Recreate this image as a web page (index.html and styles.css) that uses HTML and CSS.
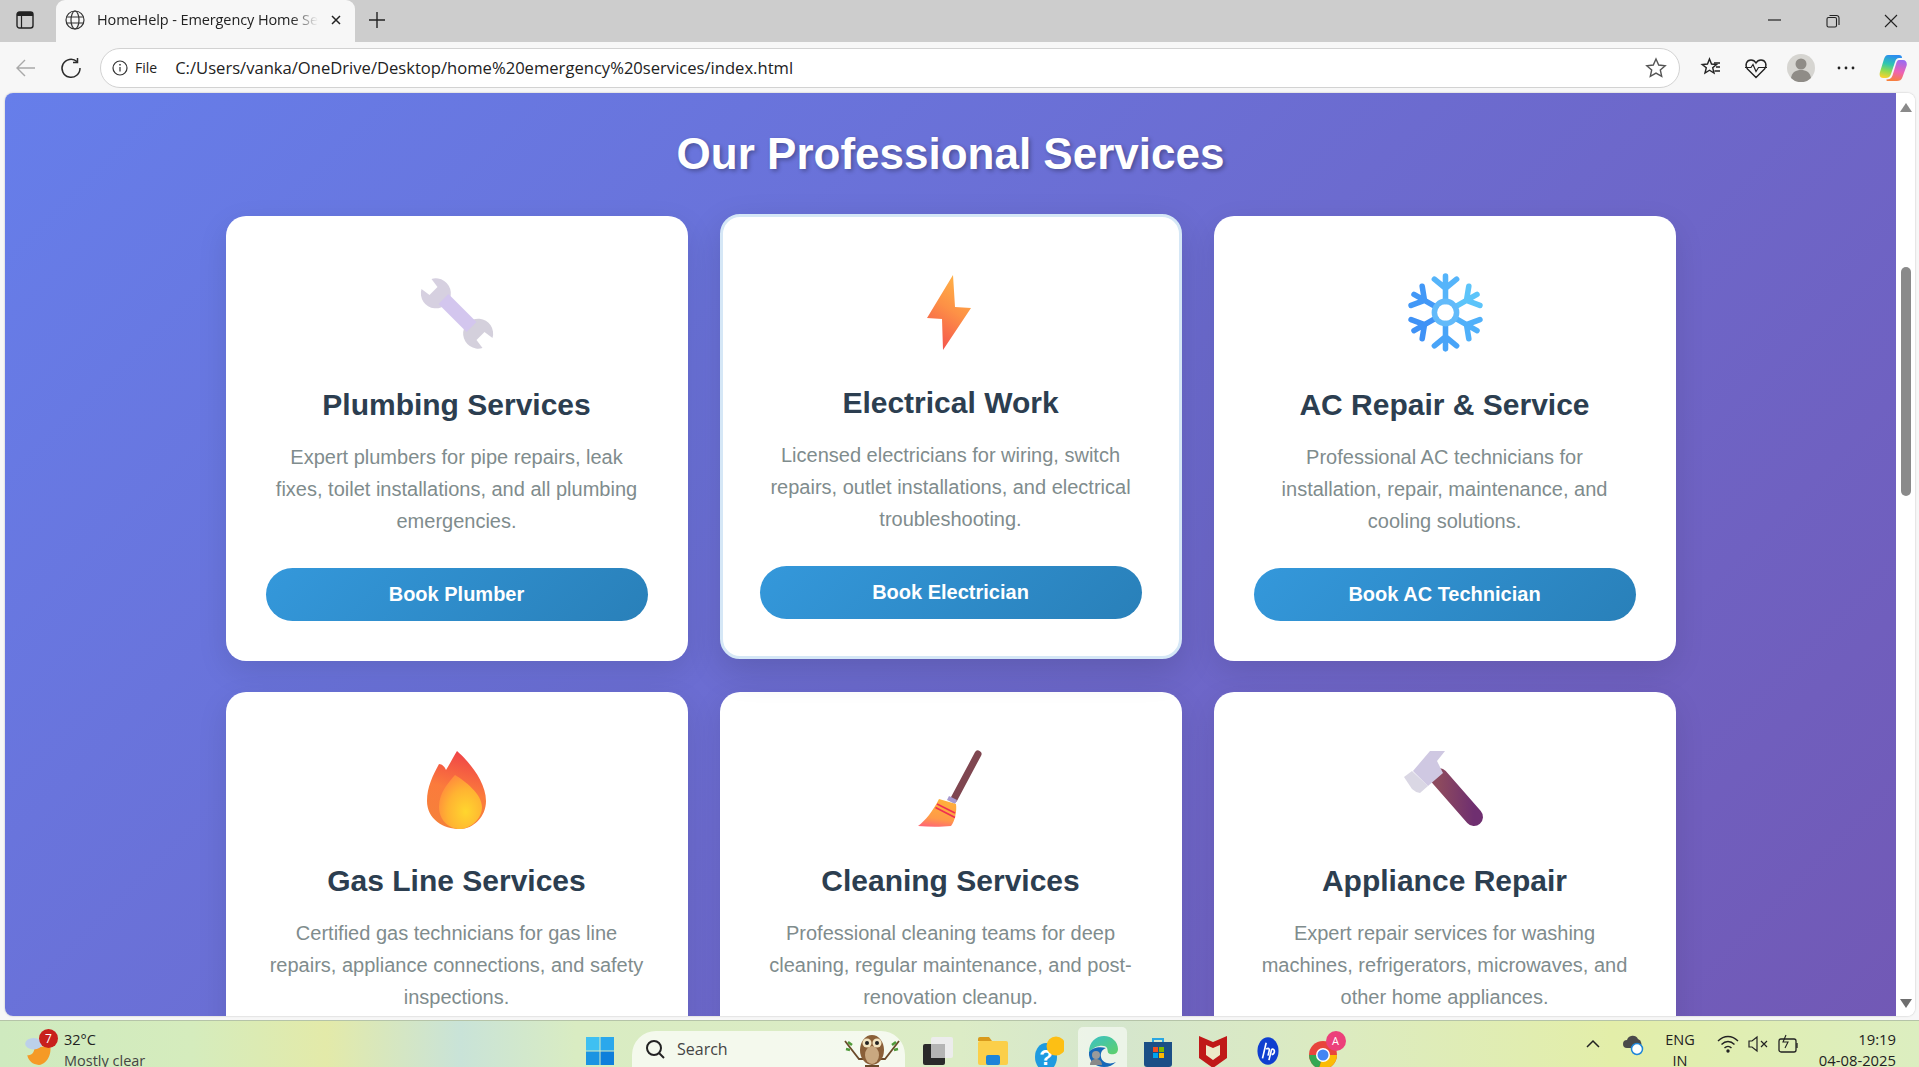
FILE: index.html
```html
<!DOCTYPE html>
<html lang="en">
  <head>
    <meta charset="UTF-8" />
    <meta name="viewport" content="width=device-width, initial-scale=1.0" />
    <title>HomeHelp - Emergency Home Services</title>
    <link rel="stylesheet" href="styles.css">
  </head>
  <body>
    <div class="browser">

      <!-- TAB STRIP -->
      <div class="tabstrip">
        <div class="strip-btn">
          <svg width="18" height="18" viewBox="0 0 18 18"><rect x="1" y="1" width="16" height="16" rx="2.5" fill="none" stroke="#222" stroke-width="1.4"/><path d="M1 3.5A2.5 2.5 0 0 1 3.5 1h11A2.5 2.5 0 0 1 17 3.5V5H1z" fill="#222"/><path d="M5.5 5v12" stroke="#222" stroke-width="1.2"/></svg>
        </div>
        <div class="tab">
          <svg width="20" height="20" viewBox="0 0 20 20" fill="none" stroke="#333" stroke-width="1.2"><circle cx="10" cy="10" r="9"/><ellipse cx="10" cy="10" rx="4" ry="9"/><path d="M1.5 7h17M1.5 13h17"/></svg>
          <span class="tab-title">HomeHelp - Emergency Home Services</span>
          <svg width="12" height="12" viewBox="0 0 12 12" stroke="#222" stroke-width="1.5"><path d="M2 2l8 8M10 2l-8 8"/></svg>
        </div>
        <div class="new-tab">
          <svg width="18" height="18" viewBox="0 0 18 18" stroke="#222" stroke-width="1.4"><path d="M9 1v16M1 9h16"/></svg>
        </div>
        <div class="win-controls">
          <svg width="14" height="14" viewBox="0 0 14 14" stroke="#222" stroke-width="1.2"><path d="M0 6h13"/></svg>
          <svg width="14" height="14" viewBox="0 0 14 14" fill="none" stroke="#222" stroke-width="1.1"><rect x="1" y="3.5" width="9.5" height="9.5" rx="1.5"/><path d="M3.5 1.5h7a2.5 2.5 0 0 1 2.5 2.5v7"/></svg>
          <svg width="14" height="14" viewBox="0 0 14 14" stroke="#222" stroke-width="1.1"><path d="M1 1l12 12M13 1L1 13"/></svg>
        </div>
      </div>

      <!-- TOOLBAR -->
      <div class="toolbar">
        <div class="nav-btn">
          <svg width="22" height="22" viewBox="0 0 22 22" fill="none" stroke="#a9a9a9" stroke-width="1.4"><path d="M20 11H2M10 3l-8 8 8 8"/></svg>
        </div>
        <div class="nav-btn">
          <svg width="22" height="22" viewBox="0 0 22 22" fill="none" stroke="#2b2b2b" stroke-width="1.5"><path d="M17 4.6A9 9 0 1 0 20 11"/><path d="M17.5 1v4.5H13"/></svg>
        </div>
        <div class="addressbar">
          <svg width="16" height="16" viewBox="0 0 16 16" fill="none" stroke="#333" stroke-width="1.2"><circle cx="8" cy="8" r="7"/><path d="M8 7v4.5"/><path d="M8 4v1.6" stroke-width="1.5"/></svg>
          <span class="file-label">File</span>
          <span class="url">C:/Users/vanka/OneDrive/Desktop/home%20emergency%20services/index.html</span>
          <svg class="star" width="22" height="22" viewBox="0 0 22 22" fill="none" stroke="#555" stroke-width="1.4"><path d="M11 2l2.7 6 6.5.7-4.9 4.3 1.4 6.4L11 16.1l-5.700 3.300 1.400-6.400L1.800 8.700 8.300 8z"/></svg>
        </div>
        <div class="toolbar-icons">
          <svg width="22" height="22" viewBox="0 0 22 22" fill="none" stroke="#222" stroke-width="1.4"><path d="M9.500 2l2 5 5 .5-3.800 3.200 1.300 5.300-4.500-2.800L5 16l1.300-5.300L2.200 7.500l5.300-.5z"/><path d="M14 6h6M16 10h4M14.500 14H20"/></svg>
          <svg width="24" height="22" viewBox="0 0 24 22" fill="none" stroke="#222" stroke-width="1.4"><path d="M3.500 12C.5 8 2.500 3 7 3c2.300 0 4 1.200 5 3 1-1.800 2.700-3 5-3 4.500 0 6.500 5 3.500 9L12 20.500z"/><path d="M1 10.500h6l2-3 3 7 2.500-4H23" stroke-width="1.2"/></svg>
          <svg class="avatar" width="28" height="28" viewBox="0 0 28 28"><circle cx="14" cy="14" r="14" fill="#d6d5d1"/><circle cx="14" cy="10" r="5.500" fill="#8f8c87"/><path d="M4 24c1-6 5-8 10-8s9 2 10 8a14 14 0 0 1-20 0z" fill="#8f8c87"/></svg>
          <svg width="22" height="22" viewBox="0 0 22 22" fill="#222"><circle cx="4" cy="11" r="1.400"/><circle cx="11" cy="11" r="1.400"/><circle cx="18" cy="11" r="1.400"/></svg>
          <svg width="28" height="28" viewBox="0 0 28 28">
            <defs>
              <linearGradient id="cpA" x1="0.500" y1="0" x2="0.300" y2="1"><stop offset="0" stop-color="#2b8df0"/><stop offset=".4" stop-color="#2fc6b0"/><stop offset=".7" stop-color="#8fdc50"/><stop offset="1" stop-color="#f8d22e"/></linearGradient>
              <linearGradient id="cpB" x1="0.600" y1="0" x2="0.400" y2="1"><stop offset="0" stop-color="#9a6cf0"/><stop offset=".55" stop-color="#ee62b4"/><stop offset="1" stop-color="#f7803c"/></linearGradient>
            </defs>
            <path d="M9 1H20C22 1 23 2 23 4H20C18 4 17 5 16 8L12 20C11 23 9 24 7 24H4C1 24 0 21 1 18L5 5C6 2.500 7 1 9 1Z" fill="url(#cpA)"/>
            <path d="M20 6H24C27 6 28.500 9 27.500 12L23.500 23C22.500 26 20.500 27 18 27H9C7.500 27 7 26 7.500 25.500C10 25.500 12.500 24.500 13.500 21.500L17 10C17.500 8 18.500 6 20 6Z" fill="url(#cpB)"/>
          </svg>
        </div>
      </div>

      <!-- PAGE AREA -->
      <div class="viewport">
        <main class="page">
          <section class="services">
            <h2 class="services-title">Our Professional Services</h2>
            <div class="services-grid">

              <article class="service-card">
                <svg class="service-icon" viewBox="0 0 100 100">
                  <g transform="translate(-6.500 0)">
                    <path d="M31 19L37 27L29 35L21 29A15 15 0 1 0 31 19Z" fill="#d6d0e0"/>
                    <path d="M82 88L76 80L84 72L92 78A15 15 0 1 0 82 88Z" fill="#d4d0dc"/>
                    <path d="M43 39L71 67" stroke="#d3c6ee" stroke-width="14"/>
                  </g>
                </svg>
                <h3>Plumbing Services</h3>
                <p>Expert plumbers for pipe repairs, leak fixes, toilet installations, and all plumbing emergencies.</p>
                <button class="book-btn">Book Plumber</button>
              </article>

              <article class="service-card service-card-hover">
                <svg class="service-icon" viewBox="0 0 100 100">
                  <defs>
                    <linearGradient id="boltFill" x1=".7" y1="0" x2=".3" y2="1"><stop offset="0" stop-color="#ffb347"/><stop offset=".45" stop-color="#fd9146"/><stop offset="1" stop-color="#f4524e"/></linearGradient>
                  </defs>
                  <path transform="translate(-1 2)" d="M53 15L55 47L71 48L43 90L42 59L27 58Z" fill="url(#boltFill)"/>
                </svg>
                <h3>Electrical Work</h3>
                <p>Licensed electricians for wiring, switch repairs, outlet installations, and electrical troubleshooting.</p>
                <button class="book-btn">Book Electrician</button>
              </article>

              <article class="service-card">
                <svg class="service-icon" viewBox="0 0 100 100" fill="none" stroke-width="5.500" stroke-linecap="round">
                  <g transform="translate(50.500 52.500) scale(1.010) translate(-50 -52)">
                    <g stroke="#55b4fa"><path d="M50 41V16M50 28L39 19M50 28L61 19"/></g>
                    <g transform="rotate(60 50 52)" stroke="#5cc4fa"><path d="M50 41V16M50 28L39 19M50 28L61 19"/></g>
                    <g transform="rotate(120 50 52)" stroke="#4fb0fa"><path d="M50 41V16M50 28L39 19M50 28L61 19"/></g>
                    <g transform="rotate(180 50 52)" stroke="#48a4f8"><path d="M50 41V16M50 28L39 19M50 28L61 19"/></g>
                    <g transform="rotate(240 50 52)" stroke="#3f92f6"><path d="M50 41V16M50 28L39 19M50 28L61 19"/></g>
                    <g transform="rotate(300 50 52)" stroke="#4298f7"><path d="M50 41V16M50 28L39 19M50 28L61 19"/></g>
                    <circle cx="50" cy="52" r="11" stroke="#62bafa"/>
                  </g>
                </svg>
                <h3>AC Repair &amp; Service</h3>
                <p>Professional AC technicians for installation, repair, maintenance, and cooling solutions.</p>
                <button class="book-btn">Book AC Technician</button>
              </article>

              <article class="service-card">
                <svg class="service-icon" viewBox="0 0 100 100">
                  <defs>
                    <linearGradient id="flameOuter" x1=".6" y1="0" x2=".4" y2="1"><stop offset="0" stop-color="#ef4248"/><stop offset=".5" stop-color="#fb7b3c"/><stop offset="1" stop-color="#f5813a"/></linearGradient>
                    <radialGradient id="flameInner" cx=".62" cy=".68" r=".7"><stop offset="0" stop-color="#ffd62e"/><stop offset=".6" stop-color="#ffb332"/><stop offset="1" stop-color="#ff8c3c"/></radialGradient>
                  </defs>
                  <g transform="translate(3 3)">
                    <path d="M47 12C54 18 76 40 76 62C76 78 63 90 50 90C33 90 17 80 17 62C17 48 23 36 29 25C32 25 35 28 36 31C40 25 43 18 47 12Z" fill="url(#flameOuter)"/>
                    <path d="M45 36C55 42 72 55 72 68C72 80 60 90 50 90C38 90 29 80 29 68C29 54 38 44 45 36Z" fill="url(#flameInner)"/>
                  </g>
                </svg>
                <h3>Gas Line Services</h3>
                <p>Certified gas technicians for gas line repairs, appliance connections, and safety inspections.</p>
                <button class="book-btn">Book Gas Technician</button>
              </article>

              <article class="service-card">
                <svg class="service-icon" viewBox="0 0 100 100">
                  <defs>
                    <linearGradient id="broomFill" x1=".6" y1="0" x2=".4" y2="1"><stop offset="0" stop-color="#ffb13a"/><stop offset=".7" stop-color="#ff9a48"/><stop offset="1" stop-color="#ff6a72"/></linearGradient>
                  </defs>
                  <g transform="translate(0 3)">
                    <path d="M77 15L53 60" stroke="#7f4650" stroke-width="7" stroke-linecap="round"/>
                    <path d="M48 57L56 61L54 65L46 61Z" fill="#a79ad0"/>
                    <path d="M38 60L55 65C56 72 54 82 50 87C40 88 28 88 17 87C24 82 32 72 38 60Z" fill="url(#broomFill)"/>
                    <path d="M36 65L54 74M34.500 68.500L54 78.500" stroke="#ef2f52" stroke-width="1.600" fill="none"/>
                  </g>
                </svg>
                <h3>Cleaning Services</h3>
                <p>Professional cleaning teams for deep cleaning, regular maintenance, and post-renovation cleanup.</p>
                <button class="book-btn">Book Cleaner</button>
              </article>

              <article class="service-card">
                <svg class="service-icon" viewBox="0 0 100 100">
                  <defs>
                    <linearGradient id="hammerHandle" x1="0" y1="0" x2="1" y2="0"><stop offset="0" stop-color="#8d4a5e"/><stop offset="1" stop-color="#6f2f70"/></linearGradient>
                  </defs>
                  <g transform="translate(0 3)">
                    <path d="M44 38L79 78" stroke="url(#hammerHandle)" stroke-width="18" stroke-linecap="round"/>
                    <path d="M35 12L50 12L42 22L48 34L33 47L18 32Z" fill="#cfc8e2"/>
                    <path d="M9 38L17 32L33 47L25 54Q20 53 17 50Z" fill="#dad7e4"/>
                  </g>
                </svg>
                <h3>Appliance Repair</h3>
                <p>Expert repair services for washing machines, refrigerators, microwaves, and other home appliances.</p>
                <button class="book-btn">Book Repair</button>
              </article>

            </div>
          </section>
        </main>
        <div class="scrollbar">
          <span class="arrow-up"></span>
          <span class="thumb"></span>
          <span class="arrow-down"></span>
        </div>
      </div>

      <!-- TASKBAR -->
      <footer class="taskbar">
        <div class="tb-weather">
          <div class="weather-icon">
            <svg width="32" height="36" viewBox="0 0 30 34"><path d="M10 14c4 2 10 1 14-3 3 8-1 20-10 21C8 32 4 28 3 23c3 0 7-1 7-9z" fill="#f59a26"/><ellipse cx="9" cy="12" rx="8" ry="5.500" fill="#bcd0ea"/></svg>
            <span class="weather-badge">7</span>
          </div>
          <div class="weather-text">
            <span>32°C</span>
            <span class="weather-sub">Mostly clear</span>
          </div>
        </div>

        <div class="tb-apps">
          <div class="tb-slot">
            <svg width="30" height="30" viewBox="0 0 30 30"><path d="M1 1h13.500v13.500H1z" fill="#3fc0f2"/><path d="M15.500 1H29v13.500H15.500z" fill="#2aa8ec"/><path d="M1 15.500h13.500V29H1z" fill="#1b94e2"/><path d="M15.500 15.500H29V29H15.500z" fill="#0e7fdb"/></svg>
          </div>
          <div class="tb-search">
            <svg width="20" height="20" viewBox="0 0 20 20" fill="none" stroke="#222" stroke-width="2"><circle cx="9" cy="9" r="7"/><path d="M14 14l5 5"/></svg>
            <span>Search</span>
            <svg class="owl" width="58" height="36" viewBox="0 0 58 36">
              <path d="M2 8l14 18h26L56 8" fill="none" stroke="#6a4a2a" stroke-width="1.800"/>
              <path d="M22 32h14v4H22z" fill="#6a4a2a"/>
              <ellipse cx="29" cy="17" rx="12" ry="15" fill="#8a5f38"/>
              <ellipse cx="29" cy="22" rx="7" ry="9" fill="#c9a880"/>
              <circle cx="24" cy="10" r="4.500" fill="#f3e4c0"/>
              <circle cx="34" cy="10" r="4.500" fill="#f3e4c0"/>
              <circle cx="24" cy="10" r="2" fill="#222"/>
              <circle cx="34" cy="10" r="2" fill="#222"/>
              <path d="M5 9l4 3M53 9l-4 3M3 16l4 1M55 16l-4 1" stroke="#4f9a3a" stroke-width="2.500"/>
            </svg>
          </div>
          <div class="tb-slot">
            <svg width="30" height="30" viewBox="0 0 30 30"><rect x="0" y="8" width="22" height="21" rx="2" fill="#2a2a2a"/><rect x="8" y="1" width="22" height="21" rx="2" fill="#ececec"/><rect x="8" y="8" width="14" height="14" fill="#b5b5b5"/></svg>
          </div>
          <div class="tb-slot">
            <svg width="32" height="30" viewBox="0 0 32 30"><path d="M1 3a2 2 0 0 1 2-2h9l3 4H1z" fill="#d99a1c"/><rect x="1" y="5" width="30" height="24" rx="2" fill="#fbcf4a"/><rect x="9" y="19" width="14" height="10" rx="2" fill="#1c84d8"/></svg>
          </div>
          <div class="tb-slot">
            <svg width="32" height="36" viewBox="0 0 32 36"><ellipse cx="14" cy="21" rx="11" ry="14" fill="#1e9be0"/><text x="14" y="29" text-anchor="middle" class="help-mark">?</text><circle cx="24" cy="10" r="9.500" fill="#fdbf14"/></svg>
          </div>
          <div class="tb-slot tb-slot-active">
            <svg width="30" height="34" viewBox="0 0 30 34">
              <defs>
                <linearGradient id="edgeG" x1="0" y1="0" x2="1" y2="1"><stop offset="0" stop-color="#39c0c8"/><stop offset="1" stop-color="#5fd068"/></linearGradient>
              </defs>
              <path d="M1 18C1 8 8 2 16 2c8 0 14 6 14 13 0 5-5 6-8 5-3-1-2-4-3-6-2-4-12-3-18 4z" fill="url(#edgeG)"/>
              <path d="M1 18c-1 9 7 15 15 15 5 0 9-2 12-5-6 3-14 1-15-5-1-5 2-8 5-9-7-2-14 0-17 4z" fill="#1668b8"/>
              <circle cx="8" cy="21" r="4" fill="#9a9a9a"/><path d="M2 31c0-4 3-6 6-6s6 2 6 6z" fill="#8a8a8a"/>
            </svg>
          </div>
          <div class="tb-slot">
            <svg width="30" height="32" viewBox="0 0 30 32"><path d="M10 6V3h10v3" fill="none" stroke="#2aa6e2" stroke-width="2"/><path d="M1 6h28v22a3 3 0 0 1-3 3H4a3 3 0 0 1-3-3z" fill="#1b4f86"/><rect x="10" y="11" width="5" height="5" fill="#f25022"/><rect x="16" y="11" width="5" height="5" fill="#7fba00"/><rect x="10" y="17" width="5" height="5" fill="#00a4ef"/><rect x="16" y="17" width="5" height="5" fill="#ffb900"/></svg>
          </div>
          <div class="tb-slot">
            <svg width="28" height="32" viewBox="0 0 28 32"><path d="M0 0l14 6 14-6v22L14 32 0 22z" fill="#c01818"/><path d="M7 9l7 3 7-3v10l-7 5-7-5z" fill="#ece9c8"/></svg>
          </div>
          <div class="tb-slot">
            <svg width="22" height="30" viewBox="0 0 24 30"><ellipse cx="12" cy="15" rx="11.500" ry="15" fill="#0f3fd0"/><path d="M10 6L6 23M10 13c3-2 4 0 3 3l-1 4M16 13l-3 12M16 13c4-1 4 5 0 6" fill="none" stroke="#fff" stroke-width="1.800"/></svg>
          </div>
          <div class="tb-slot">
            <div class="chrome-icon">
              <svg width="30" height="34" viewBox="0 0 30 34"><circle cx="15" cy="19" r="14" fill="#e8453c"/><path d="M15 19L1 19A14 14 0 0 0 11 32.500z" fill="#34a853"/><path d="M15 19L11 32.500A14 14 0 0 0 29 19z" fill="#fbbc05"/><circle cx="15" cy="19" r="7" fill="#fff"/><circle cx="15" cy="19" r="5.500" fill="#4285f4"/></svg>
              <span class="chrome-badge">A</span>
            </div>
          </div>
        </div>

        <div class="tb-tray">
          <div class="tray-slot tray-wide">
            <svg width="14" height="10" viewBox="0 0 14 10" fill="none" stroke="#222" stroke-width="1.500"><path d="M1 8l6-6 6 6"/></svg>
          </div>
          <div class="tray-slot tray-wide">
            <svg width="22" height="24" viewBox="0 0 22 24"><path d="M5 16a4 4 0 0 1 0-8 6 6 0 0 1 11-1 5 5 0 0 1 1 9z" fill="#4a4a4a"/><circle cx="15" cy="17" r="5.500" fill="#fff" stroke="#1e86d8" stroke-width="1.500"/></svg>
          </div>
          <div class="tray-lang"><span>ENG</span><span>IN</span></div>
          <div class="tray-slot">
            <svg width="22" height="20" viewBox="0 0 22 20" fill="none" stroke="#222" stroke-width="1.400"><path d="M1 7c6-6 14-6 20 0M4.500 10.500c4-4 9-4 13 0M7.500 14c2-2 5-2 7 0"/><circle cx="11" cy="17" r="1" fill="#222"/></svg>
          </div>
          <div class="tray-slot">
            <svg width="20" height="18" viewBox="0 0 20 18" fill="none" stroke="#222" stroke-width="1.200"><path d="M1 6h3l5-4v14l-5-4H1zM13 6l6 6M19 6l-6 6"/></svg>
          </div>
          <div class="tray-slot">
            <svg width="22" height="20" viewBox="0 0 22 20" fill="none" stroke="#222" stroke-width="1.300"><rect x="2" y="5" width="17" height="13" rx="2"/><path d="M20 9v5"/><path d="M9 1L6 8h5l-3 6" stroke-width="1.100"/></svg>
          </div>
          <div class="tray-clock"><span>19:19</span><span>04-08-2025</span></div>
        </div>
      </footer>

    </div>
  </body>
</html>
```

FILE: styles.css
```css
* {
  box-sizing: border-box;
}
html, body {
  margin: 0;
  height: 100%;
  overflow: hidden;
}
body {
  font-family: "Liberation Sans", Arial, sans-serif;
}
.browser {
  width: 1919px;
  height: 1067px;
  display: flex;
  flex-direction: column;
  background: #f7f7f7;
}

/* tab strip */
.tabstrip {
  height: 42px;
  flex: none;
  display: flex;
  align-items: flex-end;
  background: #cdcdcd;
  font-family: "Open Sans", sans-serif;
}
.strip-btn {
  width: 56px;
  height: 42px;
  padding: 0 6px 2px 0;
  display: flex;
  align-items: center;
  justify-content: center;
}
.tab {
  width: 299px;
  height: 42px;
  padding: 0 13px 2px 9px;
  display: flex;
  align-items: center;
  gap: 12px;
  background: #f7f7f7;
  border-radius: 9px 9px 0 0;
}
.tab-title {
  flex: 1;
  margin-bottom: 2px;
  overflow: hidden;
  white-space: nowrap;
  font-size: 14.500px;
  letter-spacing: -0.1px;
  color: #222;
  -webkit-mask-image: linear-gradient(90deg, #000 88%, transparent);
  mask-image: linear-gradient(90deg, #000 88%, transparent);
}
.new-tab {
  width: 44px;
  height: 42px;
  padding-bottom: 2px;
  display: flex;
  align-items: center;
  justify-content: center;
}
.win-controls {
  margin-left: auto;
  height: 42px;
  padding-right: 21px;
  display: flex;
  align-items: center;
  gap: 44px;
}

/* toolbar */
.toolbar {
  height: 51px;
  flex: none;
  display: flex;
  align-items: center;
  padding-left: 3px;
  background: #f7f7f7;
}
.nav-btn {
  width: 45px;
  height: 40px;
  display: flex;
  align-items: center;
  justify-content: center;
}
.addressbar {
  width: 1580px;
  height: 40px;
  margin-left: 7px;
  padding: 0 12px 0 11px;
  display: flex;
  align-items: center;
  background: #fff;
  border: 1.5px solid #d2d2d2;
  border-radius: 20px;
  font-family: "Open Sans", sans-serif;
  color: #222;
}
.file-label {
  margin-left: 7px;
  font-size: 14px;
}
.url {
  margin-left: 18px;
  font-size: 16.600px;
  white-space: nowrap;
}
.star {
  margin-left: auto;
}
.toolbar-icons {
  flex: 1;
  padding-left: 8px;
  display: grid;
  grid-template-columns: repeat(4, 45px) 50px;
  align-items: center;
  justify-items: center;
}

/* page */
.viewport {
  flex: 1;
  min-height: 0;
  margin: 0 4px 4px 5px;
  display: flex;
  background: #fff;
  border-radius: 8px;
  overflow: hidden;
  box-shadow: 0 0 2px rgba(0, 0, 0, 0.25);
}
.page {
  flex: 1;
  min-width: 0;
  overflow: hidden;
}
.services {
  min-height: 1960px;
  padding-top: 34px;
  background: linear-gradient(135deg, #667eea 0%, #764ba2 100%);
}
.services-title {
  margin: 0 0 35px;
  font-size: 44px;
  line-height: 54px;
  font-weight: 700;
  text-align: center;
  color: #fff;
  text-shadow: 2px 2px 4px rgba(0, 0, 0, 0.3);
}
.services-grid {
  width: 1450px;
  margin: 0 auto;
  display: grid;
  grid-template-columns: repeat(3, 1fr);
  gap: 31px 32px;
}
.service-card {
  height: 445px;
  padding: 41px 37px 37px;
  display: flex;
  flex-direction: column;
  align-items: center;
  text-align: center;
  background: #fff;
  border: 3px solid transparent;
  border-radius: 20px;
  box-shadow: 0 10px 30px rgba(0, 0, 0, 0.1);
}
.service-card-hover {
  transform: translateY(-2px);
  border-color: #d5e7f6;
  box-shadow: 0 12px 35px rgba(0, 0, 0, 0.14);
}
.service-icon {
  width: 100px;
  height: 100px;
  flex: none;
  margin-bottom: 27px;
}
.service-card h3 {
  margin: 0 0 19px;
  font-size: 30px;
  line-height: 35px;
  font-weight: 700;
  color: #2c3e50;
}
.service-card p {
  margin: 0 0 31px;
  padding: 0 3px;
  font-size: 20px;
  line-height: 32px;
  color: #7f8c8d;
}
.book-btn {
  width: 100%;
  height: 53px;
  flex: none;
  border: 0;
  border-radius: 27px;
  background: linear-gradient(135deg, #3498db, #2980b9);
  color: #fff;
  font-family: inherit;
  font-size: 20px;
  font-weight: 700;
}

/* scrollbar */
.scrollbar {
  width: 19px;
  flex: none;
  display: flex;
  flex-direction: column;
  align-items: center;
  padding: 10px 0 8px;
  background: #fff;
}
.arrow-up,
.arrow-down {
  width: 0;
  height: 0;
  border-left: 6px solid transparent;
  border-right: 6px solid transparent;
}
.arrow-up {
  border-bottom: 9px solid #8a8a8a;
}
.arrow-down {
  margin-top: auto;
  border-top: 9px solid #6e6e6e;
}
.thumb {
  width: 10px;
  height: 229px;
  margin-top: 155px;
  background: #8a8a8a;
  border-radius: 5px;
}

/* taskbar */
.taskbar {
  height: 47px;
  flex: none;
  display: flex;
  overflow: hidden;
  border-top: 1px solid #b5c4a8;
  background: linear-gradient(90deg, #cfeabf 0%, #d5ecbd 10%, #e3eaa9 17%, #c9e3d8 24%, #d9ecc2 30%, #dcecc6 50%, #d5e6cd 58%, #dcebc0 70%, #e3eea9 84%, #dceec0 100%);
  font-family: "Open Sans", sans-serif;
  font-size: 14.500px;
  color: #222;
}
.tb-weather {
  width: 575px;
  flex: none;
  padding-left: 24px;
  display: flex;
  align-items: flex-start;
  gap: 9px;
}
.weather-icon {
  position: relative;
  width: 31px;
  height: 46px;
  padding-top: 10px;
}
.weather-badge {
  position: absolute;
  top: 8px;
  left: 15px;
  width: 19px;
  height: 19px;
  border-radius: 50%;
  background: #c8201c;
  color: #fff;
  font-size: 12px;
  line-height: 19px;
  text-align: center;
}
.weather-text {
  padding-top: 8px;
  display: flex;
  flex-direction: column;
  line-height: 21px;
}
.weather-sub {
  color: #444;
}
.tb-apps {
  display: flex;
  align-items: flex-start;
  gap: 6px;
  padding-top: 6px;
}
.tb-slot {
  width: 49px;
  height: 47px;
  flex: none;
  padding-top: 9px;
  display: flex;
  justify-content: center;
  align-items: flex-start;
}
.tb-slot-active {
  background: rgba(255, 255, 255, 0.55);
  border-radius: 5px;
  padding-top: 7px;
}
.tb-search {
  width: 273px;
  height: 47px;
  flex: none;
  margin: 4px 2px 0;
  padding: 0 4px 0 13px;
  display: flex;
  align-items: flex-start;
  gap: 12px;
  background: rgba(255, 255, 255, 0.7);
  border-radius: 24px 24px 0 0;
  font-size: 16px;
  color: #444;
}
.tb-search > svg:first-child {
  margin-top: 8px;
}
.tb-search span {
  margin-top: 7px;
}
.owl {
  margin-left: auto;
  margin-top: 2px;
}
.help-mark {
  font-family: "Liberation Sans", sans-serif;
  font-size: 22px;
  font-weight: 700;
  fill: #fff;
}
.chrome-icon {
  position: relative;
  width: 30px;
  height: 34px;
}
.chrome-badge {
  position: absolute;
  top: -5px;
  left: 18px;
  width: 20px;
  height: 20px;
  border-radius: 50%;
  background: #ec407a;
  color: #fff;
  font-size: 11px;
  line-height: 20px;
  text-align: center;
}
.tb-tray {
  margin-left: auto;
  padding-right: 23px;
  display: flex;
  align-items: center;
}
.tray-slot {
  width: 30px;
  height: 46px;
  display: flex;
  align-items: center;
  justify-content: center;
}
.tray-wide {
  width: 40px;
}
.tray-lang {
  width: 54px;
  margin-right: 6px;
  padding-top: 8px;
  height: 46px;
  display: flex;
  flex-direction: column;
  align-items: center;
  line-height: 21px;
}
.tray-clock {
  width: 90px;
  margin-left: 3px;
  padding-top: 8px;
  height: 46px;
  display: flex;
  flex-direction: column;
  align-items: flex-end;
  line-height: 21px;
  font-size: 14.800px;
}
```
